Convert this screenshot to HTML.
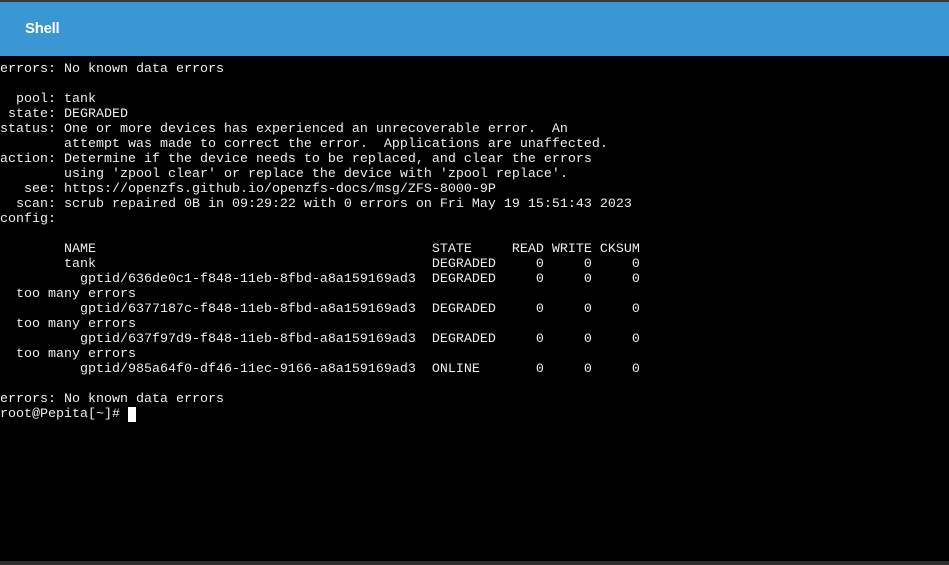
<!DOCTYPE html>
<html><head><meta charset="utf-8"><style>
html,body{margin:0;padding:0;width:949px;height:565px;overflow:hidden;background:#000;}
.top{position:absolute;left:0;top:0;width:949px;height:2px;background:#3a3a3a;}
.hdr{position:absolute;left:0;top:2px;width:949px;height:54px;background:#3a97d3;}
.hdr span{position:absolute;left:25px;top:18px;font:bold 15px "Liberation Sans",sans-serif;color:#fff;letter-spacing:-0.3px;}
pre{position:absolute;left:0;top:62px;margin:0;font-family:"Liberation Mono",monospace;font-size:13.33px;line-height:15px;color:#ededed;}
.cur{display:inline-block;width:8px;height:15px;background:#fff;vertical-align:top;}
.bot{position:absolute;left:0;top:561px;width:949px;height:4px;background:#2d2d2d;}
</style></head><body>
<div class="top"></div>
<div class="hdr"><span>Shell</span></div>
<pre>errors: No known data errors

  pool: tank
 state: DEGRADED
status: One or more devices has experienced an unrecoverable error.  An
        attempt was made to correct the error.  Applications are unaffected.
action: Determine if the device needs to be replaced, and clear the errors
        using 'zpool clear' or replace the device with 'zpool replace'.
   see: https://openzfs.github.io/openzfs-docs/msg/ZFS-8000-9P
  scan: scrub repaired 0B in 09:29:22 with 0 errors on Fri May 19 15:51:43 2023
config:

        NAME                                          STATE     READ WRITE CKSUM
        tank                                          DEGRADED     0     0     0
          gptid/636de0c1-f848-11eb-8fbd-a8a159169ad3  DEGRADED     0     0     0
  too many errors
          gptid/6377187c-f848-11eb-8fbd-a8a159169ad3  DEGRADED     0     0     0
  too many errors
          gptid/637f97d9-f848-11eb-8fbd-a8a159169ad3  DEGRADED     0     0     0
  too many errors
          gptid/985a64f0-df46-11ec-9166-a8a159169ad3  ONLINE       0     0     0

errors: No known data errors
root@Pepita[~]# <span class="cur"></span></pre>
<div class="bot"></div>
</body></html>
